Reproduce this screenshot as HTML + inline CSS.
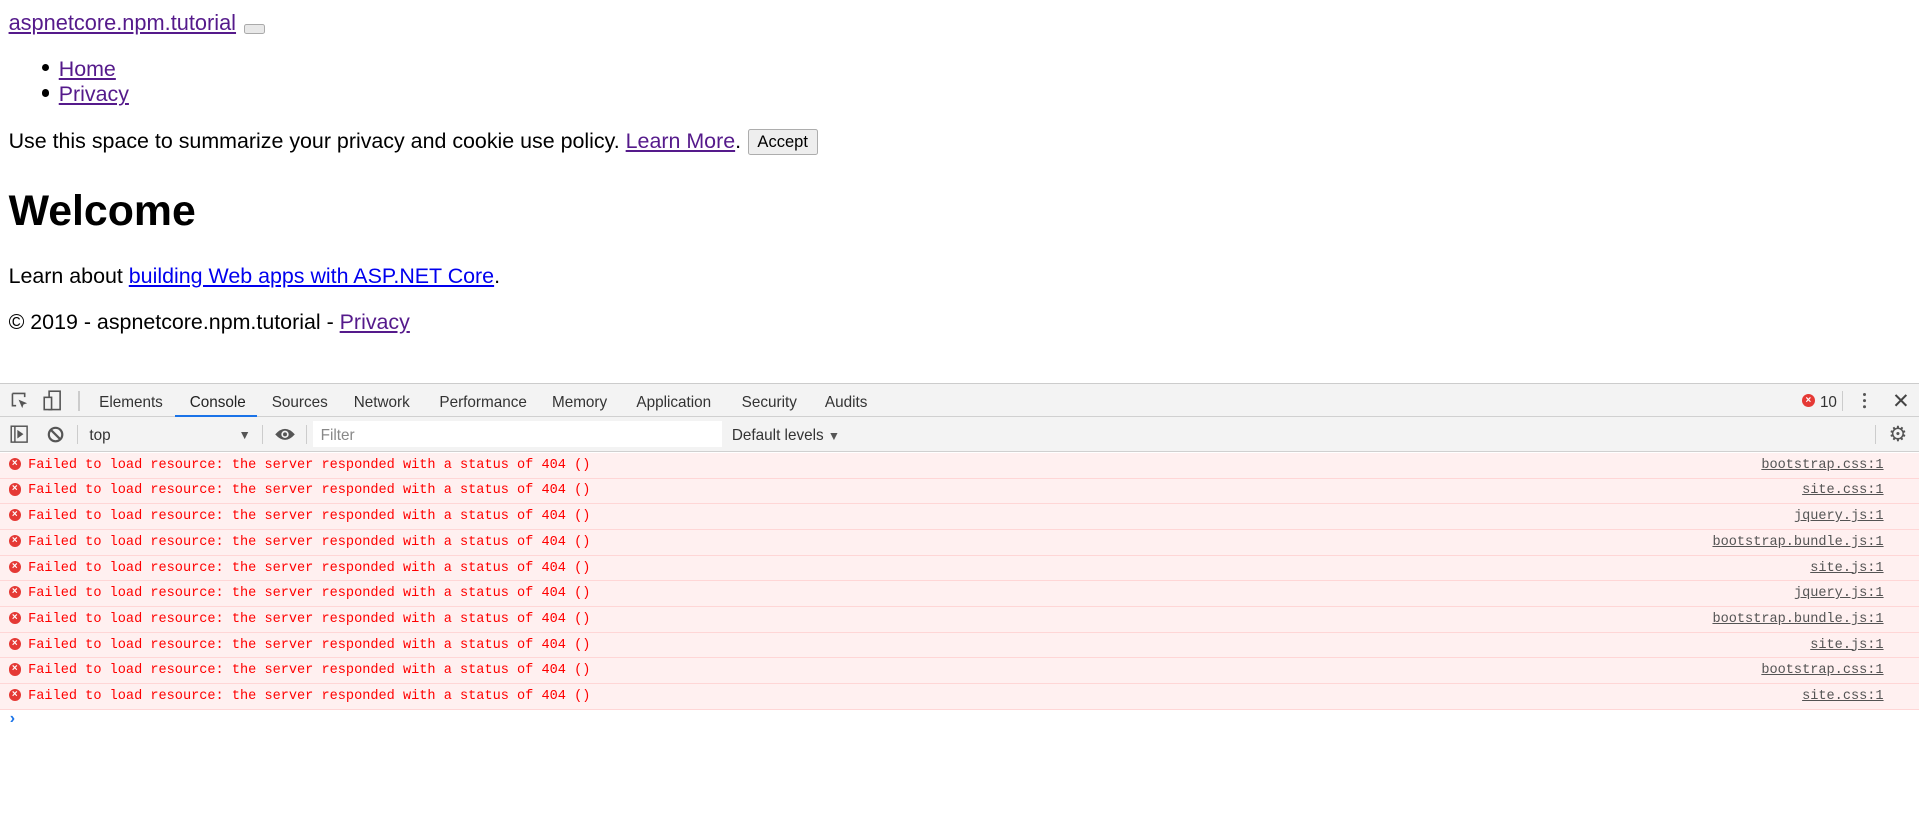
<!DOCTYPE html>
<html><head><meta charset="utf-8"><style>
html,body{margin:0;padding:0;background:#fff;overflow:hidden}
body{zoom:1.2239;width:1568px;height:683px;position:relative;font-family:"Liberation Sans",sans-serif;color:#000}
.a{position:absolute;white-space:nowrap;line-height:1}
a{color:#551a8b;text-decoration:underline}
.t{font-size:17.5px}
.tabs{position:absolute;left:0;top:313px;width:1568px;height:28px;background:#f3f3f3;border-top:1px solid #ccc;border-bottom:1px solid #d0d0d0;box-sizing:border-box}
.tb{position:absolute;top:341px;left:0;width:1568px;height:28px;background:#f3f3f3;border-bottom:1px solid #d0d0d0;box-sizing:border-box}
.tab{position:absolute;top:8px;font-size:12.5px;color:#333}
.row{position:absolute;left:0;width:1568px;height:21px;background:#fff0f0;border-bottom:1px solid #ffd6d6;box-sizing:border-box;font-family:"Liberation Mono",monospace;font-size:11.1px;color:#f00}
.row .m{position:absolute;left:23px;top:4px}
.row .s{position:absolute;right:29px;top:4px;color:#545454;text-decoration:underline}
.row .e{position:absolute;left:7px;top:4px;width:10px;height:10px;border-radius:50%;background:#e53935;color:#fff;font-size:8px;line-height:10px;text-align:center;font-family:"Liberation Sans",sans-serif;font-weight:bold}
</style></head><body>
<div class="a t" style="left:7px;top:10px;font-size:17.8px"><a href="#">aspnetcore.npm.tutorial</a></div>
<div style="position:absolute;left:199px;top:20px;width:16px;height:6px;background:#e8e8e8;border:1px solid #aaa;border-radius:2px"></div>
<div class="a" style="left:34px;top:52px;width:6px;height:6px;border-radius:50%;background:#000"></div>
<div class="a t" style="left:48px;top:48px"><a href="#">Home</a></div>
<div class="a" style="left:34px;top:73px;width:6px;height:6px;border-radius:50%;background:#000"></div>
<div class="a t" style="left:48px;top:69px"><a href="#">Privacy</a></div>
<div class="a t" style="left:7px;top:107px">Use this space to summarize your privacy and cookie use policy. <a href="#">Learn More</a>.</div>
<div style="position:absolute;left:611px;top:105px;width:57px;height:22px;box-sizing:border-box;background:#eee;border:1px solid #adadad;border-radius:2px;font-size:13.5px;text-align:center;line-height:20px">Accept</div>
<div class="a" style="left:7px;top:155px;font-size:35px;font-weight:bold">Welcome</div>
<div class="a t" style="left:7px;top:217px">Learn about <a href="#" style="color:#0000ee">building Web apps with ASP.NET Core</a>.</div>
<div class="a t" style="left:7px;top:255px">© 2019 - aspnetcore.npm.tutorial - <a href="#">Privacy</a></div>

<div class="tabs">
<svg style="position:absolute;left:8px;top:6px" width="16" height="16" viewBox="0 0 16 16"><path d="M2 2h10v3M2 2v10h3" fill="none" stroke="#555" stroke-width="1.3"/><path d="M7 7l7 3-3 1-1 3z" fill="#555"/></svg>
<svg style="position:absolute;left:35px;top:5px" width="16" height="18" viewBox="0 0 16 18"><rect x="5" y="1" width="9" height="15" fill="none" stroke="#555" stroke-width="1.3"/><rect x="1" y="6" width="6" height="10" fill="#f3f3f3" stroke="#555" stroke-width="1.3"/></svg>
<div style="position:absolute;left:64px;top:6px;width:1px;height:16px;background:#ccc"></div>
<div class="tab" style="left:81px">Elements</div>
<div class="tab" style="left:155px;color:#222">Console</div>
<div style="position:absolute;left:143px;top:25px;width:67px;height:2px;background:#1a73e8"></div>
<div class="tab" style="left:222px">Sources</div>
<div class="tab" style="left:289px">Network</div>
<div class="tab" style="left:359px">Performance</div>
<div class="tab" style="left:451px">Memory</div>
<div class="tab" style="left:520px">Application</div>
<div class="tab" style="left:606px">Security</div>
<div class="tab" style="left:674px">Audits</div>
<div style="position:absolute;left:1472px;top:8px;width:11px;height:11px;border-radius:50%;background:#e53935;color:#fff;font-size:8px;line-height:11px;text-align:center;font-weight:bold">×</div>
<div class="tab" style="left:1487px">10</div>
<div style="position:absolute;left:1505px;top:6px;width:1px;height:16px;background:#ccc"></div>
<div style="position:absolute;left:1522px;top:7px;width:3px;height:3px;border-radius:50%;background:#555;box-shadow:0 5px 0 #555,0 10px 0 #555"></div>
<div class="tab" style="left:1546px;top:4px;font-size:17px;color:#444">✕</div>
</div>
<div class="tb">
<svg style="position:absolute;left:8px;top:6px" width="15" height="15" viewBox="0 0 15 15"><rect x="1" y="1" width="13" height="13" fill="none" stroke="#555" stroke-width="1.2"/><path d="M4 1v13" stroke="#555" stroke-width="1.2"/><path d="M6 4l5 3.5-5 3.5z" fill="#555"/></svg>
<svg style="position:absolute;left:38px;top:7px" width="14" height="14" viewBox="0 0 14 14"><circle cx="7" cy="7" r="5.5" fill="none" stroke="#555" stroke-width="1.8"/><path d="M3 3l8 8" stroke="#555" stroke-width="1.8"/></svg>
<div style="position:absolute;left:63px;top:6px;width:1px;height:16px;background:#ccc"></div>
<div class="tab" style="left:73px">top</div>
<div class="tab" style="left:195px;font-size:10px;top:9px;color:#555">▼</div>
<div style="position:absolute;left:214px;top:6px;width:1px;height:16px;background:#ccc"></div>
<svg style="position:absolute;left:224px;top:8px" width="18" height="12" viewBox="0 0 18 12"><path d="M1 6Q9-3 17 6Q9 15 1 6z" fill="#555"/><circle cx="9" cy="6" r="3" fill="#f3f3f3"/><circle cx="9" cy="6" r="1.6" fill="#555"/></svg>
<div style="position:absolute;left:250px;top:6px;width:1px;height:16px;background:#ccc"></div>
<div style="position:absolute;left:256px;top:3px;width:334px;height:21px;background:#fff"></div>
<div class="tab" style="left:262px;color:#888">Filter</div>
<div class="tab" style="left:598px">Default levels <span style="font-size:10px;color:#555">▼</span></div>
<div style="position:absolute;left:1532px;top:6px;width:1px;height:16px;background:#ccc"></div>
<div class="tab" style="left:1543px;top:4px;font-size:17px;color:#555">⚙</div>
</div>

<div class="row" style="top:370px"><span class="e">×</span><span class="m">Failed to load resource: the server responded with a status of 404 ()</span><span class="s">bootstrap.css:1</span></div>
<div class="row" style="top:391px"><span class="e">×</span><span class="m">Failed to load resource: the server responded with a status of 404 ()</span><span class="s">site.css:1</span></div>
<div class="row" style="top:412px"><span class="e">×</span><span class="m">Failed to load resource: the server responded with a status of 404 ()</span><span class="s">jquery.js:1</span></div>
<div class="row" style="top:433px"><span class="e">×</span><span class="m">Failed to load resource: the server responded with a status of 404 ()</span><span class="s">bootstrap.bundle.js:1</span></div>
<div class="row" style="top:454px"><span class="e">×</span><span class="m">Failed to load resource: the server responded with a status of 404 ()</span><span class="s">site.js:1</span></div>
<div class="row" style="top:475px"><span class="e">×</span><span class="m">Failed to load resource: the server responded with a status of 404 ()</span><span class="s">jquery.js:1</span></div>
<div class="row" style="top:496px"><span class="e">×</span><span class="m">Failed to load resource: the server responded with a status of 404 ()</span><span class="s">bootstrap.bundle.js:1</span></div>
<div class="row" style="top:517px"><span class="e">×</span><span class="m">Failed to load resource: the server responded with a status of 404 ()</span><span class="s">site.js:1</span></div>
<div class="row" style="top:538px"><span class="e">×</span><span class="m">Failed to load resource: the server responded with a status of 404 ()</span><span class="s">bootstrap.css:1</span></div>
<div class="row" style="top:559px"><span class="e">×</span><span class="m">Failed to load resource: the server responded with a status of 404 ()</span><span class="s">site.css:1</span></div>
<div class="a" style="left:8px;top:581px;font-size:13px;color:#1a73e8;font-weight:bold">›</div>
</body></html>
